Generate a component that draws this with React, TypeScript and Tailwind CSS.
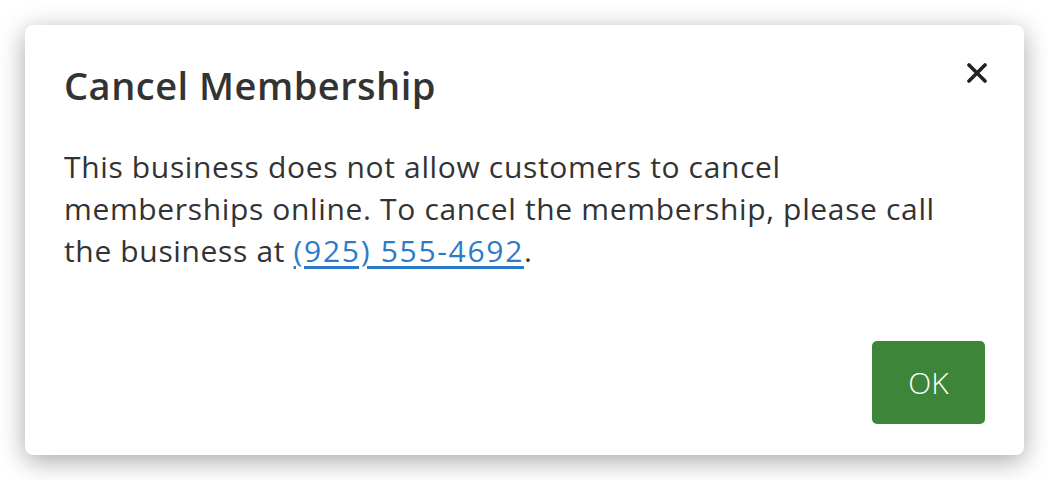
export default function App() {
    return (
        <div className="min-h-[480px] bg-white p-[25px]" style={{ fontFamily: '"Open Sans", "Liberation Sans", sans-serif' }}>
            <div className="flex h-[430px] w-[999px] flex-col rounded-[8px] bg-white pl-[39px] pr-[39px] pt-[38px] pb-[31px] shadow-[0_6px_26px_rgba(0,0,0,0.35)]">
                <div className="flex items-start justify-between">
                    <h2 className="text-[38px] font-semibold leading-[44px] tracking-[0.5px] text-[#333333]">
                        Cancel Membership
                    </h2>
                    <button className="-mr-[2px] text-[#222222]">
                        <svg width="20" height="20" viewBox="0 0 20 20" fill="none" stroke="currentColor" strokeWidth="3.6" strokeLinecap="round">
                            <path d="M2 2L18 18M18 2L2 18" />
                        </svg>
                    </button>
                </div>
                <p className="mt-[39px] text-[30px] leading-[42px] tracking-[0.65px] text-[#333333]">
                    This business does not allow customers to cancel
                    <br />
                    memberships online. To cancel the membership, please call
                    <br />
                    the business at{" "}
                    <a href="#" className="tracking-[1.7px] text-[#2b7bc9] underline underline-offset-[4px]">
                        (925) 555-4692
                    </a>
                    .
                </p>
                <div className="mt-auto flex justify-end">
                    <button className="h-[83px] w-[113px] rounded-[5px] bg-[#3d8539] text-[30px] font-light text-white">
                        OK
                    </button>
                </div>
            </div>
        </div>
    );
}
